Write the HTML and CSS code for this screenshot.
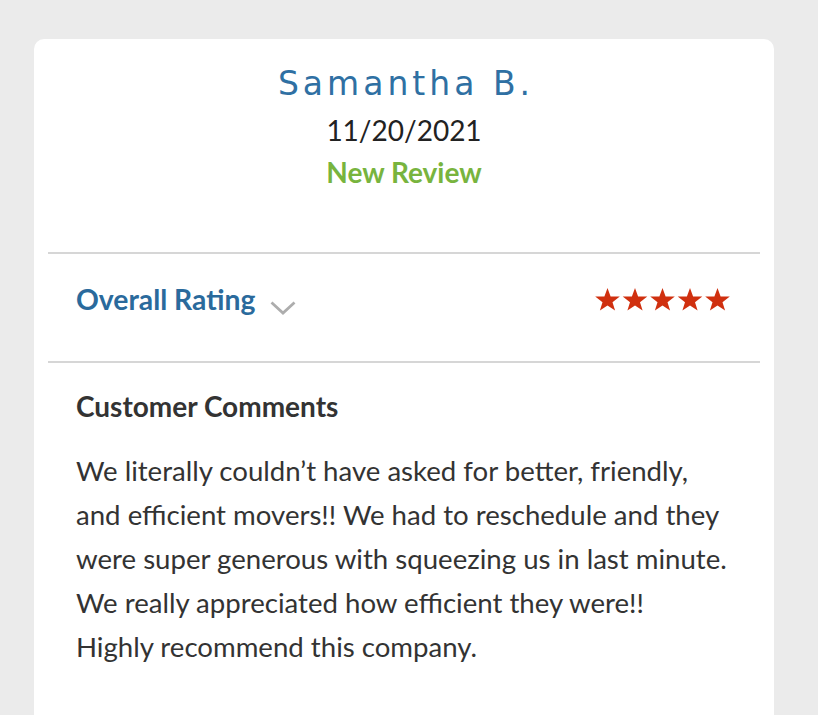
FILE: index.html
```html
<!DOCTYPE html>
<html>
<head>
<meta charset="utf-8">
<link rel="stylesheet" href="styles.css">
</head>
<body>
<div class="card">
  <div class="header">
    <div class="name">Samantha B.</div>
    <div class="date">11/20/2021</div>
    <div class="status">New Review</div>
  </div>
  <div class="rating-row">
    <div class="rating-label">Overall Rating
      <svg class="chev" width="26" height="14" viewBox="0 0 26 14"><path d="M1.5 1.5 L13 12 L24.5 1.5" fill="none" stroke="#adadad" stroke-width="2.8"/></svg>
    </div>
    <div class="stars">
      <svg width="139" height="26" viewBox="0 0 139 26">
        <defs><polygon id="s" points="13.5,1 16.6,9.4 25.8,9.6 18.5,15.2 21.1,23.5 13.5,18.6 5.9,23.5 8.5,15.2 1.2,9.6 10.4,9.4"/></defs>
        <use href="#s" x="0" fill="#d0300f"/>
        <use href="#s" x="27.5" fill="#d0300f"/>
        <use href="#s" x="55" fill="#d0300f"/>
        <use href="#s" x="82.5" fill="#d0300f"/>
        <use href="#s" x="110" fill="#d0300f"/>
      </svg>
    </div>
  </div>
  <div class="comments">
    <div class="comments-title">Customer Comments</div>
    <p class="comments-text">We literally couldn’t have asked for better, friendly,<br>and efficient movers!! We had to reschedule and they<br>were super generous with squeezing us in last minute.<br>We really appreciated how efficient they were!!<br>Highly recommend this company.</p>
  </div>
</div>
</body>
</html>
```
FILE: styles.css
```css
html, body {
  margin: 0;
  padding: 0;
  background: #ebebeb;
  height: 715px;
  overflow: hidden;
}
body {
  padding: 39px 44px 0 34px;
  font-family: Lato, "Liberation Sans", sans-serif;
}
.card {
  background: #fff;
  border-radius: 10px;
  padding: 0 14px;
  height: 690px;
}
.header {
  display: flex;
  flex-direction: column;
  align-items: center;
  padding: 24px 0 59px;
  border-bottom: 2px solid #d6d6d6;
}
.name {
  font-family: "DejaVu Sans", sans-serif;
  font-size: 33px;
  color: #2f70a3;
  letter-spacing: 4px;
  line-height: 42px;
  font-weight: 400;
  padding-left: 4px;
}
.date {
  font-size: 28px;
  color: #222;
  line-height: 42px;
  margin-top: 4px;
}
.status {
  font-size: 28px;
  color: #78b43e;
  font-weight: 700;
  line-height: 42px;
}
.rating-row {
  display: flex;
  justify-content: space-between;
  align-items: flex-start;
  height: 79px;
  padding: 28px 28px 0;
  border-bottom: 2px solid #d6d6d6;
}
.rating-label {
  font-size: 28.3px;
  font-weight: 700;
  color: #2a6a9c;
  line-height: 34px;
  display: flex;
  align-items: flex-start;
  gap: 15px;
}
.chev {
  margin-top: 19px;
}
.stars {
  display: flex;
  margin-top: 5px;
  margin-right: -1px;
}
.comments {
  padding: 26px 28px 0;
}
.comments-title {
  font-size: 28px;
  font-weight: 700;
  color: #333;
  line-height: 34px;
}
.comments-text {
  margin: 26px 0 0;
  font-size: 27.6px;
  line-height: 44px;
  color: #333;
  white-space: nowrap;
}
```
